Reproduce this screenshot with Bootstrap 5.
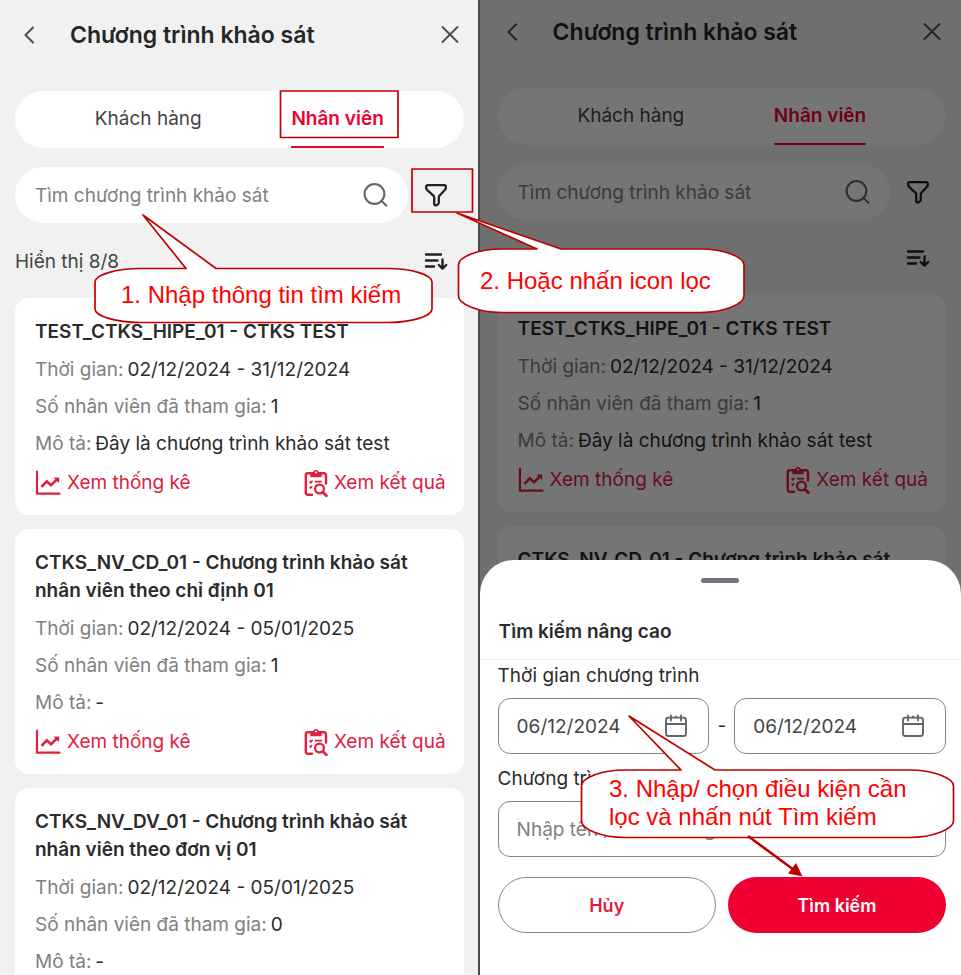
<!DOCTYPE html>
<html lang="vi">
<head>
<meta charset="utf-8">
<meta name="viewport" content="width=device-width, initial-scale=1">
<title>Chương trình khảo sát</title>
<link href="https://cdn.jsdelivr.net/npm/bootstrap@5.3.0/dist/css/bootstrap.min.css" rel="stylesheet">
<style>
  :root { --brand: #ee0033; --ink: #2b2b2b; --muted: #808080; --note: #c00000; }
  body { font-family: Inter, "Noto Sans", sans-serif; font-size: 19px; line-height: 28px; color: var(--ink); background: #f1f1f1; }
  button, input { font: inherit; color: inherit; }
  svg { display: block; flex: none; }
  .screen { background: #f1f1f1; padding: 0 14px 0 15px; }
  .screen-list { flex: 0 0 49.7%; }
  .screen-filter { flex: 1 1 0; min-width: 0; border-left: 2px solid #4a4a4a; padding: 0 15px 0 18px; }
  .plain-btn { border: 0; background: none; padding: 0; }
  .topbar { height: 70px; padding: 0 4px 0 5px; margin-bottom: 21px; color: #4c4c4c; }
  .screen-filter .topbar { height: 64px; margin-bottom: 24px; }
  .topbar h1 { font-size: 23px; line-height: 28px; font-weight: 600; color: #262626; margin-left: 30px; }
  .tab-pill { height: 57px; border-radius: 29px; padding: 0 35px; margin-bottom: 19px; }
  .tab-pill button { border-bottom: 2px solid transparent; color: #444; }
  .tab-pill button.chosen { color: var(--brand); border-color: var(--brand); font-weight: 600; }
  .search-pill { height: 56px; border-radius: 28px; padding: 0 20px; color: #666; }
  .bare-input { border: 0; outline: 0; background: none; padding: 2px 0 0; min-width: 0; width: 100%; }
  .bare-input::placeholder { color: var(--muted); opacity: 1; }
  .side-btn { width: 56px; color: #222; }
  .count-row { height: 75px; padding-top: 2px; color: #444; }
  .survey { border-radius: 14px; padding: 20px 18px 18px 20px; margin-bottom: 14px; }
  .survey h2 { font-size: 19px; line-height: 28px; font-weight: 600; margin-bottom: 10px; }
  .survey dl { row-gap: 9px; margin-bottom: 11px; }
  .survey dt { font-weight: 400; color: var(--muted); }
  .survey a { color: #e0203f; gap: 6px; }
  .dim { background: rgba(0, 0, 0, .54); }
  .sheet { border-radius: 34px 34px 0 0; padding: 18px 0 42px; }
  .grip { width: 38px; height: 5px; border-radius: 3px; background: #74747e; }
  .sheet h2 { font-size: 19px; line-height: 28px; font-weight: 600; padding: 35px 15px 13px 19px; border-bottom: 1px solid #ececec; }
  .sheet form { padding: 2px 15px 0 18px; }
  .dates { margin-bottom: 11px; }
  .field { height: 56px; border: 1px solid #858585; border-radius: 12px; padding: 0 20px 0 18px; color: #444; }
  .field svg { color: #666; }
  .acts { gap: 12px; margin-top: 20px; }
  .act { height: 56px; border-radius: 28px; font-size: 18px; font-weight: 600; flex: 1; }
  .act-cancel, .act-cancel:hover { border: 1px solid #8f8482; color: #dc1f3c; background: #fff; }
  .act-go, .act-go:hover { background: var(--brand); color: #fff; }
  .notes { inset: 0; pointer-events: none; }
  .note-text { font-family: "Liberation Sans", Arial, sans-serif; font-size: 24px; line-height: 28px; color: #ff0000; white-space: nowrap; }
  .note-1 { left: 121px; top: 281px; }
  .note-2 { left: 480px; top: 267px; }
  .note-3 { left: 609px; top: 775px; }
</style>
<script src="https://cdn.jsdelivr.net/npm/bootstrap@5.3.0/dist/js/bootstrap.bundle.min.js"></script>
</head>
<body>
<svg class="d-none" aria-hidden="true">
  <symbol id="i-back" viewBox="0 0 20 20"><path d="M13 2.500 5.500 10 13 17.500" fill="none" stroke="currentColor" stroke-width="2" stroke-linecap="round" stroke-linejoin="round"/></symbol>
  <symbol id="i-close" viewBox="0 0 20 20"><path d="M2.500 2 17.500 17M17.500 2 2.500 17" fill="none" stroke="currentColor" stroke-width="1.900" stroke-linecap="round"/></symbol>
  <symbol id="i-search" viewBox="0 0 24 24"><circle cx="11" cy="10.500" r="9.500" fill="none" stroke="currentColor" stroke-width="2"/><path d="m17.800 17.300 4.700 4.500" stroke="currentColor" stroke-width="2" stroke-linecap="round"/></symbol>
  <symbol id="i-filter" viewBox="0 0 24 24"><path d="M2.200 3.600c0-1 .6-1.500 1.500-1.500h16.600c.9 0 1.500.5 1.500 1.500v1.300c0 .8-.3 1.300-.8 1.900l-5.600 6c-.4.5-.6 1-.6 1.600v5.300c0 .6-.2 1-.7 1.400l-1.700 1.100c-1 .6-2.200 0-2.200-1.200v-6.600c0-.6-.2-1.100-.6-1.600L3 6.800c-.5-.6-.8-1.100-.8-1.900z" fill="none" stroke="currentColor" stroke-width="2.300" stroke-linejoin="round"/></symbol>
  <symbol id="i-sort" viewBox="0 0 24 24"><path d="M2 4.500h15M2 10.500h11.500M2 16.500h8M18.500 9.500v9M14.800 15l3.700 3.700 3.700-3.700" fill="none" stroke="currentColor" stroke-width="2.400" stroke-linecap="round" stroke-linejoin="round"/></symbol>
  <symbol id="i-chart" viewBox="0 0 26 26"><path d="M2 1.500v22.200h22.500" fill="none" stroke="currentColor" stroke-width="2.200" stroke-linejoin="round" stroke-linecap="round"/><path d="m6.500 16.800 5.300-5.500 4.200 4L22.300 9" fill="none" stroke="currentColor" stroke-width="2.600"/><path d="M18.600 7.600h5.600v5.600z" fill="currentColor"/></symbol>
  <symbol id="i-result" viewBox="0 0 24 28"><path d="M8 25.800H3.600a1.800 1.800 0 0 1-1.800-1.800V6a1.800 1.800 0 0 1 1.800-1.800h16.600A1.800 1.800 0 0 1 22 6v8.500" fill="none" stroke="currentColor" stroke-width="2.400" stroke-linecap="round"/><path d="M6.300 3.200h2.800a3 3 0 0 1 5.800 0h2.800v4a1 1 0 0 1-1 1H7.300a1 1 0 0 1-1-1z" fill="currentColor"/><circle cx="12" cy="3.600" r="1" fill="#fff"/><path d="m5.600 12.700 1.100 1.100 1.900-2M10.800 12.700H18M5.600 18l1 1 1.500-1.700" fill="none" stroke="currentColor" stroke-width="1.700"/><circle cx="15.500" cy="20" r="4.400" fill="none" stroke="currentColor" stroke-width="2.300"/><path d="m18.800 23.300 3.600 3.400" stroke="currentColor" stroke-width="2.800" stroke-linecap="round"/></symbol>
  <symbol id="i-calendar" viewBox="0 0 24 24"><rect x="2" y="3.600" width="20" height="18.400" rx="2.500" fill="none" stroke="currentColor" stroke-width="1.900"/><path d="M2 10h20M7 1.500v5M17 1.500v5M12 2.500v1" stroke="currentColor" stroke-width="1.900" stroke-linecap="round"/></symbol>
</svg>

<main class="d-flex vh-100 position-relative overflow-hidden">
  <section class="screen screen-list vh-100 overflow-hidden" aria-label="Danh sách chương trình">
    <header class="topbar d-flex align-items-center">
      <button class="plain-btn" type="button" aria-label="Quay lại"><svg width="20" height="20"><use href="#i-back"/></svg></button>
      <h1 class="mb-0">Chương trình khảo sát</h1>
      <button class="plain-btn ms-auto" type="button" aria-label="Đóng"><svg width="20" height="20"><use href="#i-close"/></svg></button>
    </header>
    <nav class="tab-pill bg-white d-flex justify-content-around">
      <button class="plain-btn" type="button">Khách hàng</button>
      <button class="plain-btn chosen" type="button">Nhân viên</button>
    </nav>
    <div class="d-flex">
      <div class="search-pill bg-white d-flex align-items-center flex-fill">
        <input class="bare-input" type="text" placeholder="Tìm chương trình khảo sát" aria-label="Tìm chương trình khảo sát">
        <svg width="25" height="25"><use href="#i-search"/></svg>
      </div>
      <button class="plain-btn side-btn d-flex align-items-center justify-content-center" type="button" aria-label="Lọc"><svg width="24" height="24"><use href="#i-filter"/></svg></button>
    </div>
    <div class="count-row d-flex align-items-center justify-content-between">
      <span>Hiển thị 8/8</span>
      <button class="plain-btn side-btn d-flex justify-content-center" type="button" aria-label="Sắp xếp"><svg width="24" height="24"><use href="#i-sort"/></svg></button>
    </div>
    <article class="survey bg-white">
      <h2>TEST_CTKS_HIPE_01 - CTKS TEST</h2>
      <dl class="d-grid">
        <div class="d-flex gap-1"><dt>Thời gian:</dt><dd class="mb-0">02/12/2024 - 31/12/2024</dd></div>
        <div class="d-flex gap-1"><dt>Số nhân viên đã tham gia:</dt><dd class="mb-0">1</dd></div>
        <div class="d-flex gap-1"><dt>Mô tả:</dt><dd class="mb-0">Đây là chương trình khảo sát test</dd></div>
      </dl>
      <div class="d-flex justify-content-between">
        <a class="d-flex align-items-center text-decoration-none" href="#"><svg width="26" height="26"><use href="#i-chart"/></svg>Xem thống kê</a>
        <a class="d-flex align-items-center text-decoration-none" href="#"><svg width="24" height="28"><use href="#i-result"/></svg>Xem kết quả</a>
      </div>
    </article>
    <article class="survey bg-white">
      <h2>CTKS_NV_CD_01 - Chương trình khảo sát nhân viên theo chỉ định 01</h2>
      <dl class="d-grid">
        <div class="d-flex gap-1"><dt>Thời gian:</dt><dd class="mb-0">02/12/2024 - 05/01/2025</dd></div>
        <div class="d-flex gap-1"><dt>Số nhân viên đã tham gia:</dt><dd class="mb-0">1</dd></div>
        <div class="d-flex gap-1"><dt>Mô tả:</dt><dd class="mb-0">-</dd></div>
      </dl>
      <div class="d-flex justify-content-between">
        <a class="d-flex align-items-center text-decoration-none" href="#"><svg width="26" height="26"><use href="#i-chart"/></svg>Xem thống kê</a>
        <a class="d-flex align-items-center text-decoration-none" href="#"><svg width="24" height="28"><use href="#i-result"/></svg>Xem kết quả</a>
      </div>
    </article>
    <article class="survey bg-white">
      <h2>CTKS_NV_DV_01 - Chương trình khảo sát nhân viên theo đơn vị 01</h2>
      <dl class="d-grid">
        <div class="d-flex gap-1"><dt>Thời gian:</dt><dd class="mb-0">02/12/2024 - 05/01/2025</dd></div>
        <div class="d-flex gap-1"><dt>Số nhân viên đã tham gia:</dt><dd class="mb-0">0</dd></div>
        <div class="d-flex gap-1"><dt>Mô tả:</dt><dd class="mb-0">-</dd></div>
      </dl>
    </article>
  </section>

  <section class="screen screen-filter vh-100 position-relative overflow-hidden" aria-label="Tìm kiếm nâng cao">
    <header class="topbar d-flex align-items-center">
      <button class="plain-btn" type="button" aria-label="Quay lại"><svg width="20" height="20"><use href="#i-back"/></svg></button>
      <h1 class="mb-0">Chương trình khảo sát</h1>
      <button class="plain-btn ms-auto" type="button" aria-label="Đóng"><svg width="20" height="20"><use href="#i-close"/></svg></button>
    </header>
    <nav class="tab-pill bg-white d-flex justify-content-around">
      <button class="plain-btn" type="button">Khách hàng</button>
      <button class="plain-btn chosen" type="button">Nhân viên</button>
    </nav>
    <div class="d-flex">
      <div class="search-pill bg-white d-flex align-items-center flex-fill">
        <input class="bare-input" type="text" placeholder="Tìm chương trình khảo sát" aria-label="Tìm chương trình khảo sát">
        <svg width="25" height="25"><use href="#i-search"/></svg>
      </div>
      <button class="plain-btn side-btn d-flex align-items-center justify-content-center" type="button" aria-label="Lọc"><svg width="24" height="24"><use href="#i-filter"/></svg></button>
    </div>
    <div class="count-row d-flex align-items-center justify-content-end">
      <button class="plain-btn side-btn d-flex justify-content-center" type="button" aria-label="Sắp xếp"><svg width="24" height="24"><use href="#i-sort"/></svg></button>
    </div>
    <article class="survey bg-white">
      <h2>TEST_CTKS_HIPE_01 - CTKS TEST</h2>
      <dl class="d-grid">
        <div class="d-flex gap-1"><dt>Thời gian:</dt><dd class="mb-0">02/12/2024 - 31/12/2024</dd></div>
        <div class="d-flex gap-1"><dt>Số nhân viên đã tham gia:</dt><dd class="mb-0">1</dd></div>
        <div class="d-flex gap-1"><dt>Mô tả:</dt><dd class="mb-0">Đây là chương trình khảo sát test</dd></div>
      </dl>
      <div class="d-flex justify-content-between">
        <a class="d-flex align-items-center text-decoration-none" href="#"><svg width="26" height="26"><use href="#i-chart"/></svg>Xem thống kê</a>
        <a class="d-flex align-items-center text-decoration-none" href="#"><svg width="24" height="28"><use href="#i-result"/></svg>Xem kết quả</a>
      </div>
    </article>
    <article class="survey bg-white">
      <h2>CTKS_NV_CD_01 - Chương trình khảo sát nhân viên theo chỉ định 01</h2>
    </article>
    <div class="dim position-absolute top-0 start-0 w-100 h-100"></div>
    <div class="sheet bg-white position-absolute bottom-0 start-0 w-100">
      <div class="grip mx-auto"></div>
      <h2 class="mb-0">Tìm kiếm nâng cao</h2>
      <form>
        <label class="d-block mb-2" for="from-date">Thời gian chương trình</label>
        <div class="dates d-flex align-items-center gap-2">
          <div class="field d-flex align-items-center flex-fill">
            <input class="bare-input" id="from-date" type="text" value="06/12/2024">
            <svg width="24" height="24"><use href="#i-calendar"/></svg>
          </div>
          <span>-</span>
          <div class="field d-flex align-items-center flex-fill">
            <input class="bare-input" type="text" value="06/12/2024" aria-label="Đến ngày">
            <svg width="24" height="24"><use href="#i-calendar"/></svg>
          </div>
        </div>
        <label class="d-block mb-2" for="survey-name">Chương trình</label>
        <div class="field d-flex align-items-center">
          <input class="bare-input" id="survey-name" type="text" placeholder="Nhập tên / mã chương trình">
        </div>
        <div class="acts d-flex">
          <button class="btn act act-cancel" type="button">Hủy</button>
          <button class="btn act act-go" type="button">Tìm kiếm</button>
        </div>
      </form>
    </div>
  </section>

  <div class="notes position-absolute">
    <svg width="961" height="975" fill="#fff" stroke="#c00000" stroke-width="1.700" stroke-linejoin="round" aria-hidden="true">
      <path d="M280.500 91h117.500v46.500H280.500zM412 169h60.500v43H412z" fill="none"/>
      <path d="M143 215 216 268.500H388C412 268.500 432 275 432 282V309C432 316 412 322.500 388 322.500H140C116 322.500 95 316 95 309V282C95 275 116 268.500 140 268.500H186z"/>
      <path d="M457 213 561 249H700C724 249 744 257 744 265V296C744 304 724 312.500 700 312.500H502C478 312.500 458.500 304 458.500 296V265C458.500 257 478 249 502 249H537z"/>
      <path d="M629 716 715 770H909C933 770 953.500 778 953.500 786V821C953.500 829 933 837.500 909 837.500H625C601 837.500 581.500 829 581.500 821V786C581.500 778 601 770 625 770H681z"/>
      <path d="m748 836 46 34" stroke-width="2.500"/><path d="m788 873.500 8-10.500 6.500 13.500z" fill="#c00000" stroke="none"/>
    </svg>
    <div class="note-text note-1 position-absolute">1. Nhập thông tin tìm kiếm</div>
    <div class="note-text note-2 position-absolute">2. Hoặc nhấn icon lọc</div>
    <div class="note-text note-3 position-absolute">3. Nhập/ chọn điều kiện cần<br>lọc và nhấn nút Tìm kiếm</div>
  </div>
</main>
</body>
</html>
